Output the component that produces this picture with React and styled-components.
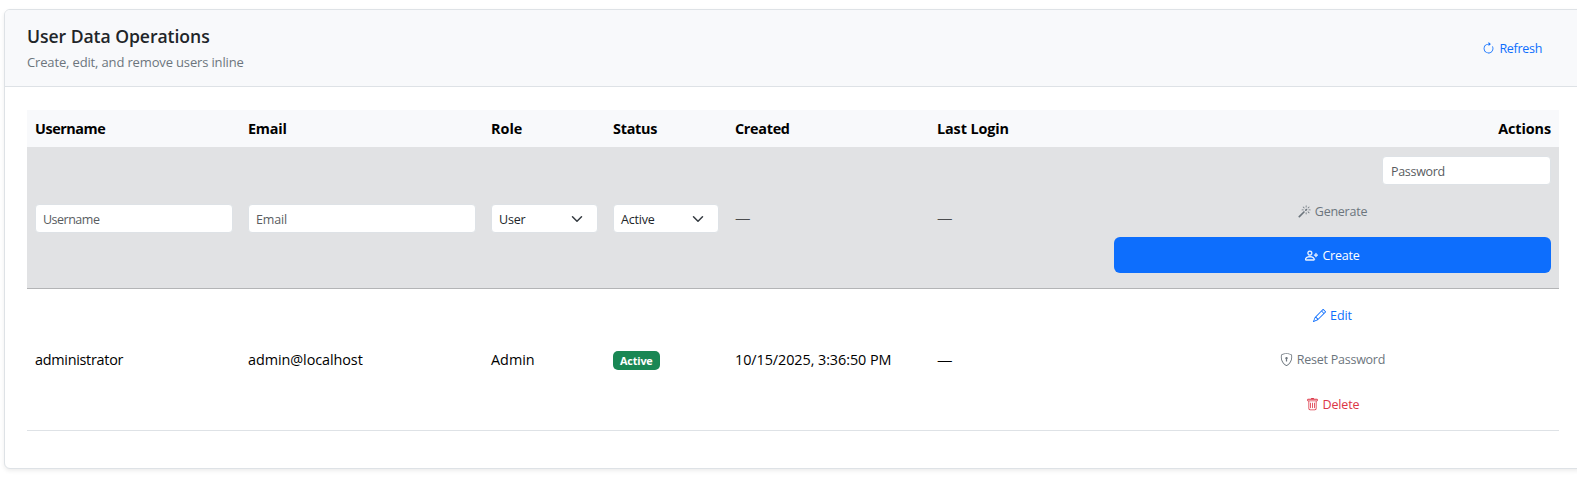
import React from "react";
import styled, { createGlobalStyle } from "styled-components";
import {
  BsArrowClockwise,
  BsMagic,
  BsPersonPlus,
  BsPencil,
  BsShieldLock,
  BsTrash,
} from "react-icons/bs";

const GlobalStyle = createGlobalStyle`
  *, *::before, *::after { box-sizing: border-box; }
  body {
    margin: 0;
    background: #fff;
    color: #212529;
    font-family: "Segoe UI", "Open Sans", "Noto Sans", sans-serif;
    font-size: 14.4px;
    overflow: hidden;
  }
`;

const Page = styled.main`
  padding: 9px 0 8px 4px;
  height: 477px;
  overflow: hidden;
`;

const Card = styled.section`
  width: 1579px;
  height: 460px;
  background: #fff;
  border: 1px solid #dee2e6;
  border-radius: 6px;
  box-shadow: 0 2px 4px rgba(0, 0, 0, 0.075);
`;

const CardHeader = styled.header`
  display: flex;
  justify-content: space-between;
  align-items: center;
  height: 77px;
  padding: 0 40px 0 22px;
  background: #f8f9fb;
  border-bottom: 1px solid #dee2e6;
  border-radius: 5px 5px 0 0;
`;

const Title = styled.h5`
  margin: 0;
  font-size: 17.6px;
  font-weight: 600;
  line-height: 22px;
  letter-spacing: -0.06px;
`;

const Subtitle = styled.p`
  margin: 5px 0 0;
  font-size: 13px;
  line-height: 20px;
  color: #6c757d;
  letter-spacing: -0.15px;
`;

const Text = styled.span`
  letter-spacing: ${(p) => p.$track || 0}px;
`;

const Dash = styled.span`
  font-size: 15.5px;
  font-weight: 300;
`;

const CardBody = styled.div`
  padding: 23px 22px;
`;

const Row = styled.div`
  display: grid;
  grid-template-columns: 213px 243px 122px 122px 202px 177px 453px;
  width: 1532px;
  align-items: center;
  color: #000;
`;

const HeadRow = styled(Row)`
  height: 37px;
  background: #f8f9fb;
  font-weight: 700;
`;

const CreateRow = styled(Row)`
  height: 142px;
  padding-top: 1px;
  background: #e1e2e4;
  border-bottom: 1px solid #b3b4b6;
`;

const UserRow = styled(Row)`
  height: 142px;
  border-bottom: 1px solid #dee2e6;
`;

const Cell = styled.div`
  padding: 0 8px;
  white-space: nowrap;
  text-align: ${(p) => (p.$end ? "right" : "left")};
  color: ${(p) => (p.$muted ? "#4b4c4e" : "inherit")};
`;

const FieldCell = styled(Cell)`
  padding: 1px ${(p) => (p.$tight ? 8 : 7)}px 0 8px;
`;

const Input = styled.input`
  display: block;
  width: ${(p) => p.$width || "100%"};
  height: 29px;
  padding: 1px 7px 0 ${(p) => (p.$width ? 8 : 7)}px;
  border: 1px solid #dee2e6;
  border-radius: 4px;
  background: #fff;
  font: 12.5px "Segoe UI", "Open Sans", "Noto Sans", sans-serif;
  letter-spacing: ${(p) => p.$track || 0}px;
  outline: none;
  &::placeholder { color: #595c5f; opacity: 1; }
`;

const Select = styled.div`
  display: flex;
  align-items: center;
  justify-content: space-between;
  height: 29px;
  padding: 1px 14px 0 7px;
  border: 1px solid #dee2e6;
  border-radius: 4px;
  background: #fff;
  color: #212529;
  font-size: 12.5px;
  letter-spacing: -0.2px;
  svg { margin-top: -1px; }
`;

const Actions = styled.div`
  display: flex;
  flex-direction: column;
  align-items: flex-end;
  align-self: start;
  gap: ${(p) => p.$gap || 8}px;
  padding: 8px 8px 0;
`;

const tones = {
  primary: "#0d6efd",
  secondary: "#6c757d",
  danger: "#dc3545",
};

const Button = styled.button`
  display: flex;
  align-items: center;
  justify-content: center;
  gap: 4px;
  width: ${(p) => (p.$block ? "100%" : "auto")};
  height: 36px;
  padding: 0;
  border: 0;
  border-radius: 6px;
  background: ${(p) => (p.$solid ? "#0d6efd" : "transparent")};
  color: ${(p) => (p.$solid ? "#fff" : tones[p.$tone])};
  font: 12.5px "Segoe UI", "Open Sans", "Noto Sans", sans-serif;
  svg {
    width: 13px;
    height: 13px;
    stroke-width: ${(p) => (p.$solid ? 0.5 : 0)};
  }
`;

const Badge = styled.span`
  display: inline-block;
  padding: 0 7px;
  height: 19px;
  line-height: 19px;
  border-radius: 5px;
  background: #198754;
  color: #fff;
  font-size: 10.8px;
  font-weight: 700;
  vertical-align: middle;
  letter-spacing: -0.15px;
`;

const Chevron = () => (
  <svg width="12" height="12" viewBox="0 0 16 16" fill="none" stroke="#343a40" strokeWidth="2" strokeLinecap="round" strokeLinejoin="round">
    <path d="m2 5 6 6 6-6" />
  </svg>
);

const columns = [
  ["Username", -0.45],
  ["Email", -0.2],
  ["Role", 0],
  ["Status", -0.25],
  ["Created", -0.3],
  ["Last Login", -0.1],
  ["Actions", -0.1],
];

export default function App() {
  return (
    <>
      <GlobalStyle />
      <Page>
        <Card>
          <CardHeader>
            <div>
              <Title>User Data Operations</Title>
              <Subtitle>Create, edit, and remove users inline</Subtitle>
            </div>
            <Button $tone="primary"><BsArrowClockwise /><Text $track={-0.3}>Refresh</Text></Button>
          </CardHeader>
          <CardBody>
            <HeadRow>
              {columns.map(([label, track]) => (
                <Cell key={label} $end={label === "Actions"}><Text $track={track}>{label}</Text></Cell>
              ))}
            </HeadRow>
            <CreateRow>
              <FieldCell><Input placeholder="Username" $track={-0.5} /></FieldCell>
              <FieldCell><Input placeholder="Email" $track={-0.15} /></FieldCell>
              <FieldCell><Select>User<Chevron /></Select></FieldCell>
              <FieldCell $tight><Select>Active<Chevron /></Select></FieldCell>
              <Cell $muted><Dash>—</Dash></Cell>
              <Cell $muted><Dash>—</Dash></Cell>
              <Actions>
                <Input placeholder="Password" $width="169px" $track={-0.3} />
                <Button $tone="secondary" $block><BsMagic /><Text $track={-0.25}>Generate</Text></Button>
                <Button $solid $block><BsPersonPlus stroke="#fff" /><Text $track={-0.2}>Create</Text></Button>
              </Actions>
            </CreateRow>
            <UserRow>
              <Cell><Text $track={-0.28}>administrator</Text></Cell>
              <Cell><Text $track={-0.07}>admin@localhost</Text></Cell>
              <Cell><Text>Admin</Text></Cell>
              <Cell><Badge>Active</Badge></Cell>
              <Cell><Text $track={-0.07}>10/15/2025, 3:36:50 PM</Text></Cell>
              <Cell><Dash>—</Dash></Cell>
              <Actions $gap={8.5}>
                <Button $tone="primary" $block><BsPencil /><Text $track={-0.1}>Edit</Text></Button>
                <Button $tone="secondary" $block><BsShieldLock /><Text $track={-0.25}>Reset Password</Text></Button>
                <Button $tone="danger" $block><BsTrash /><Text $track={-0.15}>Delete</Text></Button>
              </Actions>
            </UserRow>
          </CardBody>
        </Card>
      </Page>
    </>
  );
}
